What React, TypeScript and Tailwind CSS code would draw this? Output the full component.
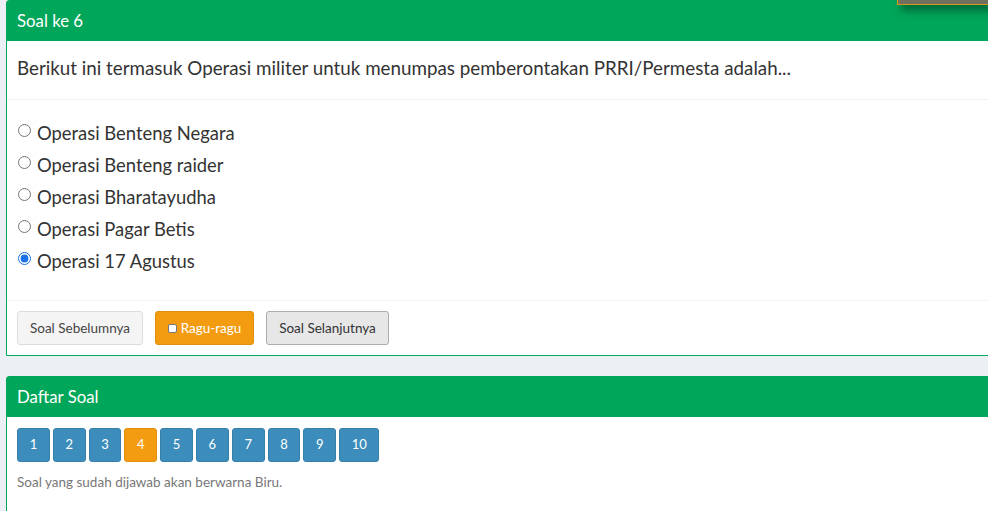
import React from "react";

const options = [
  "Operasi Benteng Negara",
  "Operasi Benteng raider",
  "Operasi Bharatayudha",
  "Operasi Pagar Betis",
  "Operasi 17 Agustus",
];

const numbers = [1, 2, 3, 4, 5, 6, 7, 8, 9, 10];

export default function App() {
  return (
    <div
      className="relative w-[988px] h-[511px] overflow-hidden bg-[#ecf0f5] pl-[6px] text-[#333]"
      style={{ fontFamily: "Lato, 'Noto Sans', sans-serif" }}
    >
      {/* Soal */}
      <div className="w-[1010px] bg-white border border-[#00a65a] rounded-tl-[3px]">
        <div className="h-10 bg-[#00a65a] flex items-center pl-[10px] text-white text-[16.8px]">
          Soal ke 6
        </div>
        <div className="px-[10px] pt-[14px] pb-[18px] text-[18.8px] leading-[26px]">
          Berikut ini termasuk Operasi militer untuk menumpas pemberontakan PRRI/Permesta adalah...
        </div>
        <div className="border-t border-[#f0f0f0] pt-[18px] pb-[22px] pl-[11px]">
          {options.map((opt, i) => (
            <label key={opt} className="h-8 flex items-center gap-[6px] text-[18.4px]">
              <input
                type="radio"
                name="jawab"
                defaultChecked={i === 4}
                className="w-[13px] h-[13px] m-0 accent-[#1a73e8] -translate-y-[4px]"
              />
              {opt}
            </label>
          ))}
        </div>
        <div className="border-t border-[#f4f4f4] px-[10px] pt-[10px] pb-[10px] flex gap-3 text-[13.5px]">
          <button className="w-[126px] h-[34px] rounded-[3px] bg-[#f4f4f4] border border-[#ddd] text-[#444]">
            Soal Sebelumnya
          </button>
          <button className="w-[99px] h-[34px] rounded-[3px] bg-[#f39c12] border border-[#e08e0b] text-white flex items-center justify-center gap-[4px]">
            <span className="w-[9px] h-[9px] rounded-[2px] bg-white border border-[#777]" />
            Ragu-ragu
          </button>
          <button className="w-[123px] h-[34px] rounded-[3px] bg-[#e7e7e7] border border-[#adadad] text-[#333]">
            Soal Selanjutnya
          </button>
        </div>
      </div>

      {/* Daftar Soal */}
      <div className="mt-5 w-[1010px] h-[200px] bg-white border border-[#00a65a] rounded-tl-[3px]">
        <div className="h-10 bg-[#00a65a] flex items-center pl-[10px] text-white text-[16.8px]">
          Daftar Soal
        </div>
        <div className="px-[10px] pt-[11px]">
          <div className="flex gap-[3px]">
            {numbers.map((n) => (
              <div
                key={n}
                className={
                  n === 4
                    ? "h-[34px] w-[32.8px] rounded-[3px] bg-[#f39c12] border border-[#e08e0b] text-white text-[13px] flex items-center justify-center"
                    : n === 10
                    ? "h-[34px] w-[40px] rounded-[3px] bg-[#3c8dbc] border border-[#367fa9] text-white text-[13px] flex items-center justify-center"
                    : "h-[34px] w-[32.8px] rounded-[3px] bg-[#3c8dbc] border border-[#367fa9] text-white text-[13px] flex items-center justify-center"
                }
              >
                {n}
              </div>
            ))}
          </div>
          <p className="mt-[10px] text-[13.5px] text-[#777]">
            Soal yang sudah dijawab akan berwarna Biru.
          </p>
        </div>
      </div>

      {/* floating panel at top right */}
      <div className="absolute left-[897px] top-[-30px] w-[120px] h-[35px] bg-[#736f5f] border border-[#d49a1f] shadow-[4px_6px_8px_rgba(0,0,0,0.35)]" />
    </div>
  );
}
